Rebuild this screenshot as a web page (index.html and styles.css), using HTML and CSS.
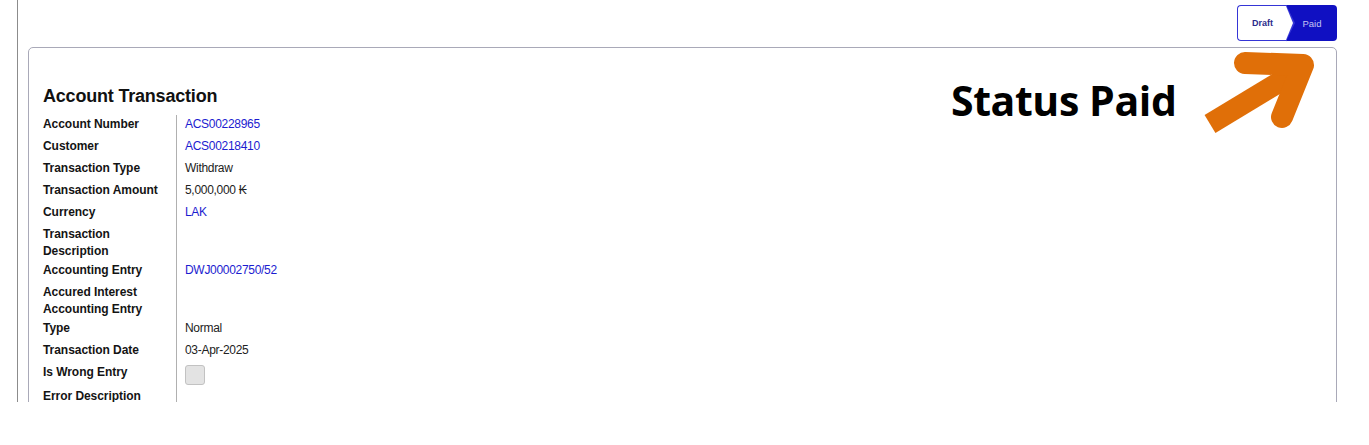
FILE: index.html
```html
<!DOCTYPE html>
<html lang="en">
<head>
    <meta charset="UTF-8">
    <title>Account Transaction</title>
    <link rel="stylesheet" href="styles.css">
</head>
<body>
<div class="page">
    <div class="status">
        <span class="step draft">Draft</span>
        <span class="step paid">Paid</span>
    </div>

    <div class="card">
        <h2 class="title">Account Transaction</h2>
        <div class="fields">
            <div class="row"><div class="label">Account Number</div><div class="value"><a href="#">ACS00228965</a></div></div>
            <div class="row"><div class="label">Customer</div><div class="value"><a href="#">ACS00218410</a></div></div>
            <div class="row"><div class="label">Transaction Type</div><div class="value">Withdraw</div></div>
            <div class="row"><div class="label">Transaction Amount</div><div class="value">5,000,000 ₭</div></div>
            <div class="row"><div class="label">Currency</div><div class="value"><a href="#">LAK</a></div></div>
            <div class="row"><div class="label">Transaction Description</div><div class="value"></div></div>
            <div class="row"><div class="label">Accounting Entry</div><div class="value"><a href="#">DWJ00002750/52</a></div></div>
            <div class="row"><div class="label">Accured Interest Accounting Entry</div><div class="value"></div></div>
            <div class="row"><div class="label">Type</div><div class="value">Normal</div></div>
            <div class="row"><div class="label">Transaction Date</div><div class="value">03-Apr-2025</div></div>
            <div class="row check-row"><div class="label">Is Wrong Entry</div><div class="value"><span class="checkbox"></span></div></div>
            <div class="row"><div class="label">Error Description</div><div class="value"></div></div>
        </div>
    </div>

    <!-- annotation -->
    <div class="note">Status Paid</div>
    <svg class="note-arrow" width="145" height="90" viewBox="1195 45 145 90">
        <line x1="1210" y1="124" x2="1296" y2="72" stroke="#e06f08" stroke-width="21"/>
        <polyline points="1245,63 1303,65 1282,117" fill="none" stroke="#e06f08" stroke-width="22" stroke-linecap="round" stroke-linejoin="round"/>
    </svg>
</div>
</body>
</html>
```
FILE: styles.css
```css
@charset "UTF-8";
body,h2,div{margin:0;padding:0}
body{font:12px/17px "Liberation Sans", Arial, "DejaVu Sans", sans-serif;color:#222;background:#fff;}
a{text-decoration:none;color:#1c1cd0;}

.page{
    position: relative;
    margin-left:17px;
    height:402px;
    border-left:1px solid #8c8c8c;
    overflow:hidden;
}
.status{
    display:flex;
    justify-content:flex-end;
    margin:5px 32px 0 0;
    height:36px;
    font-size:9px;
}
.step{
    width:50px;
    display:flex;
    align-items:center;
    justify-content:center;
    box-sizing:border-box;
}
.draft{
    position: relative;
    border:1.5px solid #3535d6;
    border-right:0;
    border-radius:4px 0 0 4px;
    font-weight:bold;
    color:#2b2b8c;
    z-index:1;
}
.draft::after{
    content:"";
    position:absolute;
    right:-8px;
    top:-1.5px;
    bottom:-1.5px;
    width:9px;
    background:#3535d6;
    clip-path:polygon(0 0,100% 50%,0 100%);
}
.draft::before{
    content:"";
    position:absolute;
    right:-6px;
    top:0;
    bottom:0;
    width:7px;
    background:#fff;
    clip-path:polygon(0 0,100% 50%,0 100%);
    z-index:1;
}
.paid{
    background:#1010c2;
    color:#c4c4f2;
    border-radius:0 4px 4px 0;
    font-size:9.5px;
}

.card{
    margin:6px 32px 0 10px;
    height:600px;
    border:1px solid #a9a9b8;
    border-radius:5px;
    padding:37px 14px 0 14px;
}
.title{
    font-size:18px;
    line-height:22px;
    font-weight:bold;
    color:#111;
    letter-spacing:-0.2px;
    margin-bottom:8px;
}
.row{
    display:flex;
    min-height:22px;
}
.label{
    width:133px;
    padding:1px 0;
    border-right:1px solid #b0b0b0;
    font-weight:bold;
    color:#141414;
    letter-spacing:-0.05px;
}
.value{
    padding:1px 0 1px 8px;
    letter-spacing:-0.3px;
}
.check-row{
    min-height:24px;
}
.checkbox{
    display:block;
    width:18px;
    height:18px;
    margin-top:1px;
    border:1px solid #c2c2c2;
    border-radius:3px;
    background:#e3e3e3;
}

.note{
    position:absolute;
    left:933px;
    top:80px;
    font:bold 41px/1 "Open Sans", sans-serif;
    color:#000;
    letter-spacing:-0.4px;
}
.note-arrow{
    position:absolute;
    left:1177px;
    top:45px;
}
```
